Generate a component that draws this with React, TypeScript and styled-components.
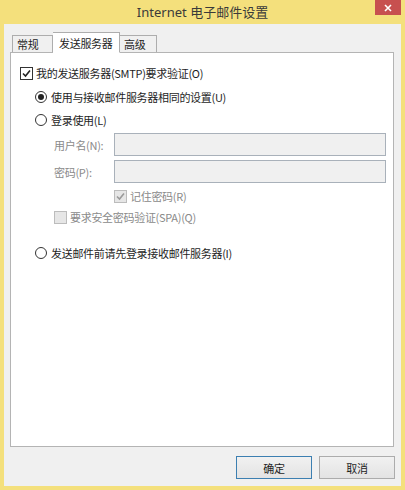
import React from 'react'
import styled, { createGlobalStyle } from 'styled-components'

const GlobalStyle = createGlobalStyle`
  html, body {
    margin: 0;
    padding: 0;
    background: #f0f0f0;
  }
  body {
    font-family: "Microsoft YaHei", "Noto Sans CJK SC", "Noto Sans", sans-serif;
    font-size: 11px;
    letter-spacing: -0.3px;
    color: #1e1e1e;
  }
`

const Window = styled.div`
  width: 405px;
  height: 490px;
  box-sizing: border-box;
  background: #f4e07c;
  padding: 0 4px 4px 4px;
  display: flex;
  flex-direction: column;
`

const TitleBar = styled.div`
  height: 24px;
  flex: none;
  display: flex;
  align-items: center;
  justify-content: center;
  position: relative;
`

const Title = styled.div`
  font-family: "Segoe UI", "Noto Sans", "Noto Sans CJK SC", sans-serif;
  font-size: 13px;
  letter-spacing: 0;
  color: #3a3a3a;
  margin-top: -2px;
`

const CloseButton = styled.div`
  position: absolute;
  right: 0;
  top: 0;
  width: 26px;
  height: 15px;
  background: #c7504f;
  display: flex;
  align-items: center;
  justify-content: center;
`

const Body = styled.div`
  flex: 1;
  background: #f0f0f0;
  display: flex;
  flex-direction: column;
  padding: 8px 7px 0 6px;
`

const TabStrip = styled.div`
  display: flex;
  align-items: flex-end;
  height: 20px;
  padding-left: 2px;
  position: relative;
  z-index: 1;
`

const Tab = styled.div<{ $active?: boolean; $w: number }>`
  width: ${(p) => p.$w}px;
  height: ${(p) => (p.$active ? '21px' : '17px')};
  box-sizing: border-box;
  padding-left: ${(p) => (p.$active ? '6px' : '4px')};
  margin-bottom: ${(p) => (p.$active ? '-1px' : '0')};
  border: 1px solid #adadad;
  border-bottom: ${(p) => (p.$active ? '1px solid #fff' : 'none')};
  background: ${(p) => (p.$active ? '#fff' : '#f0f0f0')};
  display: flex;
  align-items: center;
  position: relative;
  z-index: ${(p) => (p.$active ? 2 : 1)};
  & + & {
    border-left: ${(p) => (p.$active ? '1px solid #adadad' : 'none')};
  }
`

const Panel = styled.div`
  height: 395px;
  background: #fff;
  border: 1px solid #b4b4b4;
  box-sizing: border-box;
  padding: 11px 0 0 9px;
  display: flex;
  flex-direction: column;
`

const Row = styled.div<{ $indent?: number; $top?: number; $muted?: boolean }>`
  display: flex;
  align-items: center;
  margin-left: ${(p) => p.$indent ?? 0}px;
  margin-top: ${(p) => p.$top ?? 0}px;
  height: 18px;
  color: ${(p) => (p.$muted ? '#8a8a8a' : '#1e1e1e')};
`

const Box = styled.span<{ $disabled?: boolean }>`
  width: 11px;
  height: 11px;
  border: 1px solid ${(p) => (p.$disabled ? '#bcbcbc' : '#333')};
  background: ${(p) => (p.$disabled ? '#e6e6e6' : '#fff')};
  display: inline-flex;
  align-items: center;
  justify-content: center;
  margin-right: 3px;
  flex: none;
`

const Radio = styled.span<{ $on?: boolean }>`
  width: 10px;
  height: 10px;
  border: 1px solid #333;
  border-radius: 50%;
  background: #fff;
  display: inline-flex;
  align-items: center;
  justify-content: center;
  margin-right: 4px;
  flex: none;
  &::after {
    content: '';
    display: ${(p) => (p.$on ? 'block' : 'none')};
    width: 6px;
    height: 6px;
    border-radius: 50%;
    background: #222;
  }
`

const FieldRow = styled.div<{ $top?: number }>`
  display: flex;
  align-items: center;
  margin-top: ${(p) => p.$top ?? 0}px;
  margin-left: 34px;
`

const FieldLabel = styled.span`
  width: 60px;
  color: #8a8a8a;
`

const Input = styled.div`
  width: 272px;
  height: 23px;
  box-sizing: border-box;
  border: 1px solid #a9b1ba;
  background: #f0f0f0;
`

const Footer = styled.div`
  display: flex;
  justify-content: flex-end;
  gap: 7px;
  padding: 9px 0 0 0;
  margin-right: -1px;
`

const Button = styled.div<{ $default?: boolean }>`
  width: 76px;
  height: 23px;
  box-sizing: border-box;
  border: 1px solid ${(p) => (p.$default ? '#3c7fb1' : '#acacac')};
  background: linear-gradient(#f1f1f1, #e3e3e3);
  display: flex;
  align-items: center;
  justify-content: center;
`

const Check = ({ color }: { color: string }) => (
  <svg width="9" height="9" viewBox="0 0 9 9">
    <path d="M1 4.5 L3.5 7 L8 1.5" fill="none" stroke={color} strokeWidth="1.6" />
  </svg>
)

export default function App() {
  return (
    <>
      <GlobalStyle />
      <Window>
        <TitleBar>
          <Title>Internet 电子邮件设置</Title>
          <CloseButton>
            <svg width="8" height="8" viewBox="0 0 8 8">
              <path d="M1 1 L7 7 M7 1 L1 7" stroke="#fff" strokeWidth="1.6" />
            </svg>
          </CloseButton>
        </TitleBar>
        <Body>
          <TabStrip>
            <Tab $w={41}>常规</Tab>
            <Tab $w={67} $active>发送服务器</Tab>
            <Tab $w={37}>高级</Tab>
          </TabStrip>
          <Panel>
            <Row>
              <Box>
                <Check color="#222" />
              </Box>
              我的发送服务器(SMTP)要求验证(O)
            </Row>
            <Row $indent={15} $top={6}>
              <Radio $on />
              使用与接收邮件服务器相同的设置(U)
            </Row>
            <Row $indent={15} $top={5}>
              <Radio />
              登录使用(L)
            </Row>
            <FieldRow $top={4}>
              <FieldLabel>用户名(N):</FieldLabel>
              <Input />
            </FieldRow>
            <FieldRow $top={4}>
              <FieldLabel>密码(P):</FieldLabel>
              <Input />
            </FieldRow>
            <Row $indent={94} $top={4} $muted>
              <Box $disabled>
                <Check color="#9a9a9a" />
              </Box>
              记住密码(R)
            </Row>
            <Row $indent={34} $top={3} $muted>
              <Box $disabled />
              要求安全密码验证(SPA)(Q)
            </Row>
            <Row $indent={15} $top={18}>
              <Radio />
              发送邮件前请先登录接收邮件服务器(I)
            </Row>
          </Panel>
          <Footer>
            <Button $default>确定</Button>
            <Button>取消</Button>
          </Footer>
        </Body>
      </Window>
    </>
  )
}
